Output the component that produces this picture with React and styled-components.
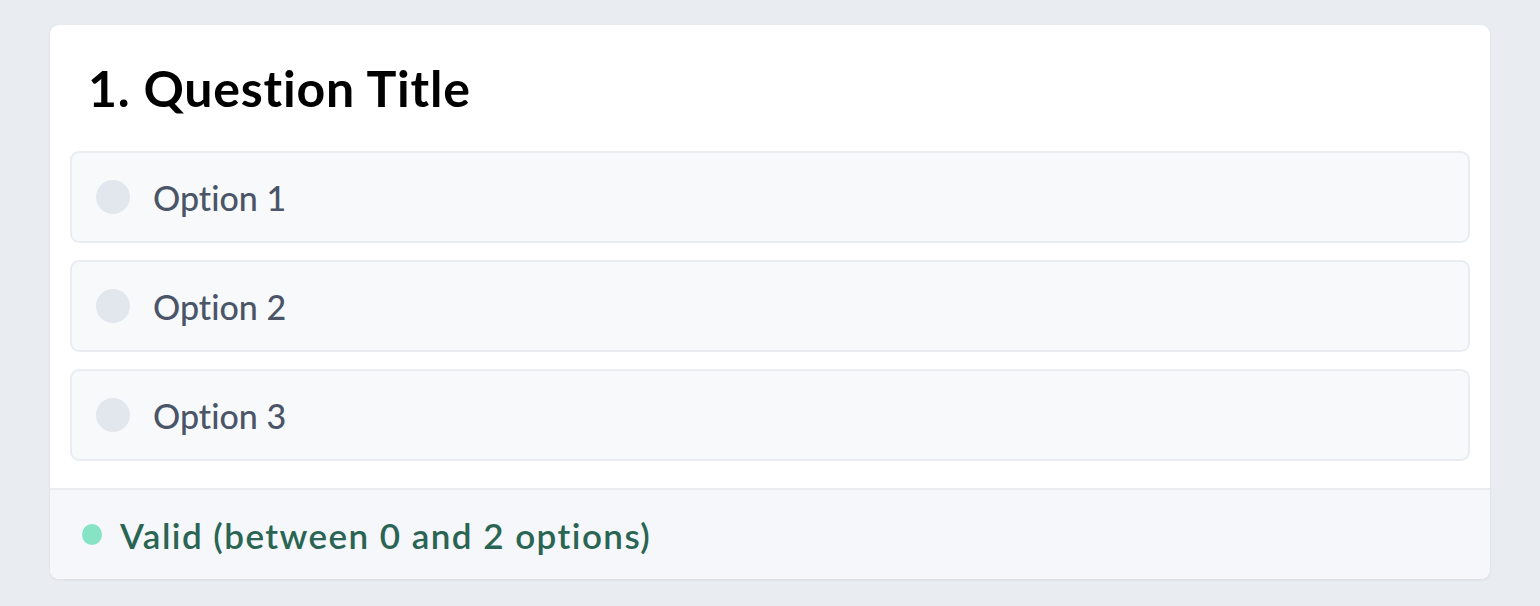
import React from 'react';
import styled, { createGlobalStyle } from 'styled-components';

const GlobalStyle = createGlobalStyle`
    html, body {
        margin: 0;
        padding: 0;
        background-color: #e9ecf1;
        font-family: 'Lato', 'Noto Sans', sans-serif;
        font-variant-ligatures: none;
    }
`;

const Page = styled.div`
    padding: 25px 50px;
    min-height: 606px;
    box-sizing: border-box;
`;

const Card = styled.div`
    background-color: #ffffff;
    border-radius: 9px;
    box-shadow: 0 1px 3px rgba(30, 40, 60, 0.08);
    overflow: hidden;
`;

const Body = styled.div`
    padding: 20px 20px 27px;
`;

const Title = styled.h2`
    margin: 0 0 16px;
    padding: 18px 18px 21px;
    font-size: 50px;
    line-height: 51px;
    font-weight: 700;
    letter-spacing: 0.8px;
    color: #000000;
`;

const OptionList = styled.div`
    display: flex;
    flex-direction: column;
    gap: 17px;
`;

const Option = styled.label`
    display: flex;
    align-items: center;
    gap: 23px;
    height: 92px;
    box-sizing: border-box;
    padding: 0 24px;
    background-color: #f8f9fb;
    border: 2px solid #e9ecf1;
    border-radius: 9px;
    cursor: pointer;
`;

const Radio = styled.span`
    width: 34px;
    height: 34px;
    border-radius: 50%;
    background-color: ${(p) => (p.checked ? '#4a5568' : '#e2e7ee')};
    flex-shrink: 0;
`;

const OptionText = styled.span`
    font-size: 34px;
    font-weight: 500;
    color: #4a5568;
`;

const Footer = styled.div`
    display: flex;
    align-items: center;
    gap: 18px;
    height: 89px;
    padding: 0 32px;
    background-color: #f5f7fa;
    border-top: 2px solid #e9ecf1;
`;

const Dot = styled.span`
    width: 20px;
    height: 21px;
    border-radius: 50%;
    background-color: ${(p) => (p.valid ? '#86e3c4' : '#f5a3a3')};
`;

const Status = styled.span`
    font-size: 35px;
    font-weight: 600;
    letter-spacing: 1.45px;
    color: ${(p) => (p.valid ? '#2a6453' : '#9b2c2c')};
`;

const options = ['Option 1', 'Option 2', 'Option 3'];

const App = () => {
    const selected = [];
    const valid = selected.length >= 0 && selected.length <= 2;

    return (
        <>
            <GlobalStyle />
            <Page>
                <Card>
                    <Body>
                        <Title>1. Question Title</Title>
                        <OptionList>
                            {options.map((opt) => (
                                <Option key={opt}>
                                    <Radio checked={selected.includes(opt)} />
                                    <OptionText>{opt}</OptionText>
                                </Option>
                            ))}
                        </OptionList>
                    </Body>
                    {/* validation summary */}
                    <Footer>
                        <Dot valid={valid} />
                        <Status valid={valid}>Valid (between 0 and 2 options)</Status>
                    </Footer>
                </Card>
            </Page>
        </>
    );
};

export default App;
